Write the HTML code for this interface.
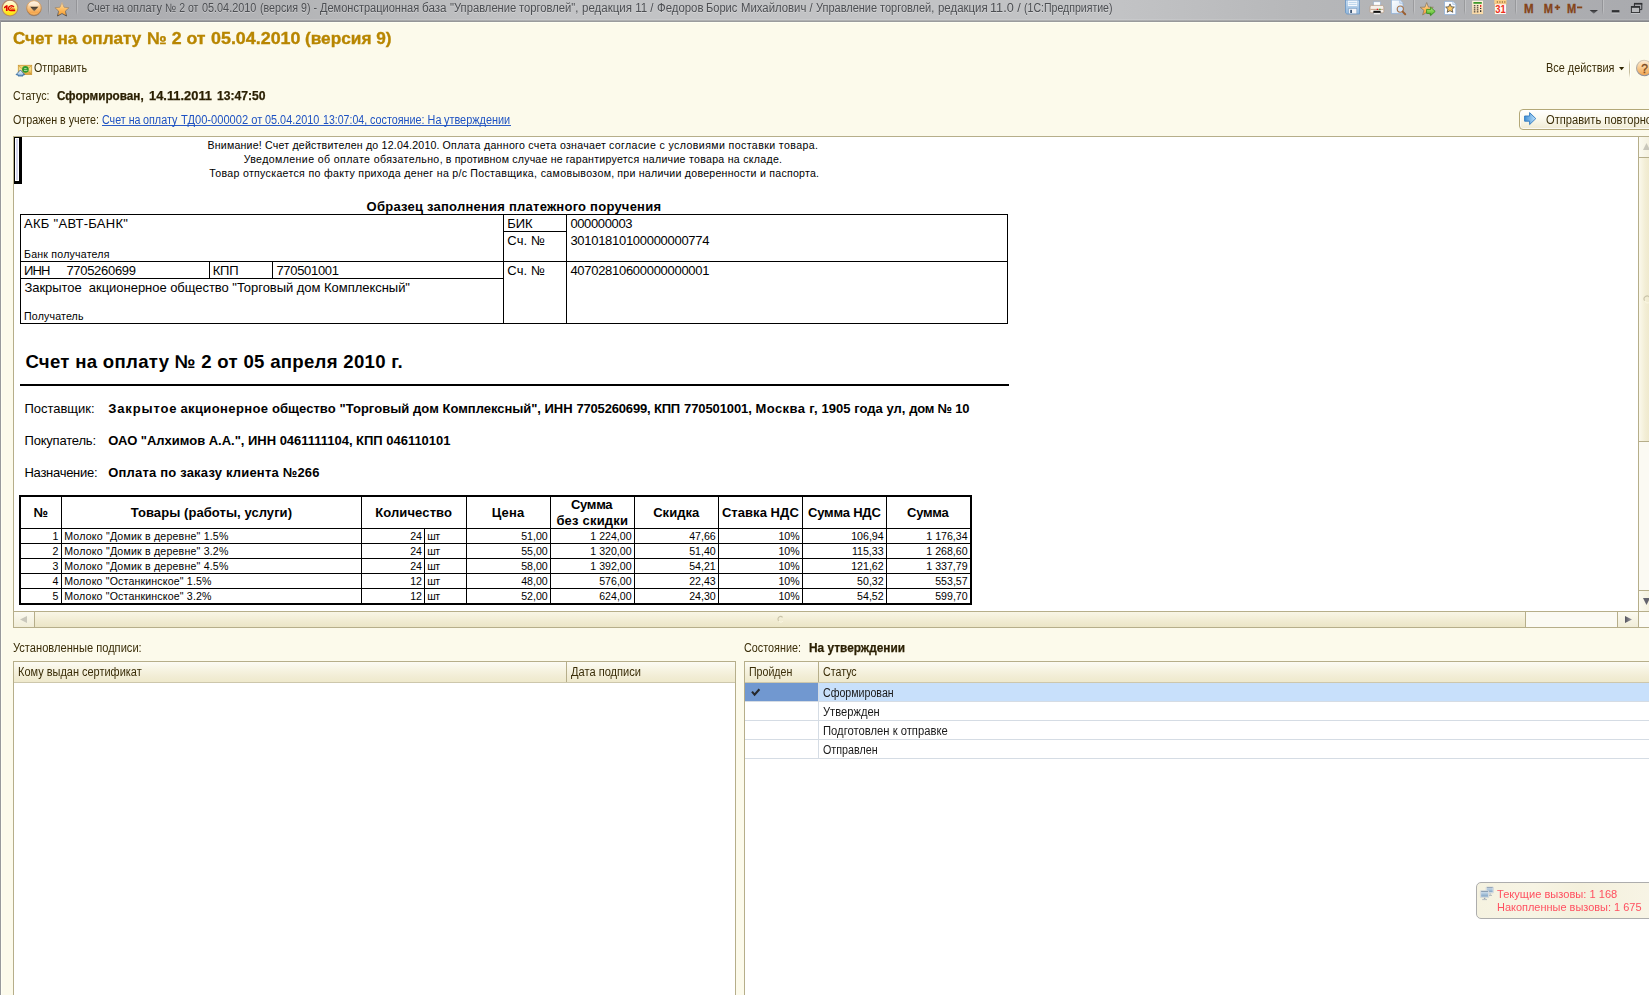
<!DOCTYPE html>
<html lang="ru">
<head>
<meta charset="utf-8">
<title>Счет на оплату № 2 от 05.04.2010 (версия 9)</title>
<style>
html,body{margin:0;padding:0;}
body{width:1649px;height:995px;overflow:hidden;background:#fcfaeb;font-family:"Liberation Sans",sans-serif;}
#app{position:relative;width:1649px;height:995px;overflow:hidden;background:#fcfaeb;}
#app *{box-sizing:border-box;}
.a{position:absolute;}
.t{position:absolute;white-space:pre;margin:0;padding:0;}
div.t span{white-space:pre;}
svg{position:absolute;overflow:visible;}
/* title bar */
#tb{left:0;top:0;width:1649px;height:22px;background:linear-gradient(90deg,#a8a9ad 0,#aaabaf 5%,#b6b7b9 20.6%,#c2c3c5 33%,#c2c3c5 68%,#b6b7b9 79%,#a9aaae 100%);}
#tbhl{left:0;top:19px;width:1649px;height:1px;background:rgba(255,255,255,.12);}
#tbline{left:0;top:20px;width:1649px;height:1px;background:rgba(0,0,0,.10);}
#tbline2{left:0;top:21px;width:1649px;height:1px;background:rgba(0,0,0,.20);}
#toplight{left:1px;top:22px;width:1648px;height:1px;background:#fffff2;}
#lb{left:0;top:20px;width:1px;height:975px;background:#98999c;}
#lb2{left:1px;top:22px;width:1px;height:973px;background:#fffff2;}
.vsep{width:2px;background:linear-gradient(90deg,rgba(0,0,0,.13) 0,rgba(0,0,0,.13) 50%,rgba(255,255,255,.22) 50%,rgba(255,255,255,.22) 100%);-webkit-mask-image:linear-gradient(#000 0,#000 70%,transparent 100%);mask-image:linear-gradient(#000 0,#000 70%,transparent 100%);}
/* document frame */
#doc{left:13px;top:136px;width:1640px;height:492px;border:1px solid #b6ae8a;background:#fff;}
.bk{background:#000;}
.hdr{background:linear-gradient(#fcfbf4 0,#f7f4e3 35%,#f2edd6 70%,#efe9cc 100%);border-bottom:1px solid #cdc7ac;}
.frame{border:1px solid #b6ae8a;background:#fff;}
.tan{background:#b6ae8a;}
.gl{background:#d5dce4;}
</style>
</head>
<body>
<div id="app">
<!-- ===== window chrome ===== -->
<div class="a" id="tb"></div>
<div class="a" id="tbhl"></div>
<div class="a" id="tbline"></div>
<div class="a" id="tbline2"></div>
<div class="a" id="toplight"></div>
<div class="a" id="lb"></div>
<div class="a" id="lb2"></div>
<div class="a vsep" style="left:48px;top:0;height:15px;"></div>
<div class="a vsep" style="left:76px;top:0;height:15px;"></div>
<div class="a vsep" style="left:1413px;top:0;height:15px;"></div>
<div class="a vsep" style="left:1464px;top:0;height:15px;"></div>
<div class="a vsep" style="left:1515px;top:0;height:15px;"></div>
<div class="a vsep" style="left:1602px;top:0;height:15px;"></div>
<svg style="left:0;top:0;" width="1649" height="22" viewBox="0 0 1649 22">
<defs>
  <linearGradient id="g1c" x1="0" y1="0" x2="0" y2="1"><stop offset="0" stop-color="#fffce4"/><stop offset="0.35" stop-color="#fff7a8"/><stop offset="0.7" stop-color="#ffea30"/><stop offset="1" stop-color="#ffdf00"/></linearGradient>
  <linearGradient id="g1cr" x1="0" y1="0" x2="0" y2="1"><stop offset="0" stop-color="#d9b898"/><stop offset="1" stop-color="#9c6a54"/></linearGradient>
  <linearGradient id="gddr" x1="0" y1="0" x2="0" y2="1"><stop offset="0" stop-color="#e0a868"/><stop offset="1" stop-color="#a8703c"/></linearGradient>
  <linearGradient id="gstr" x1="0" y1="0" x2="0" y2="1"><stop offset="0" stop-color="#d0b088"/><stop offset="0.6" stop-color="#8a7a68"/><stop offset="1" stop-color="#4c4a4a"/></linearGradient>
  <linearGradient id="gdd" x1="0" y1="0" x2="0" y2="1"><stop offset="0" stop-color="#fdeeda"/><stop offset="0.45" stop-color="#f8c88c"/><stop offset="0.8" stop-color="#f5a64e"/><stop offset="1" stop-color="#f9c070"/></linearGradient>
  <linearGradient id="gtri" x1="0" y1="0" x2="0" y2="1"><stop offset="0" stop-color="#3c342c"/><stop offset="0.6" stop-color="#6e5c48"/><stop offset="1" stop-color="#b89868"/></linearGradient>
  <linearGradient id="gstar" x1="0" y1="0" x2="0" y2="1"><stop offset="0" stop-color="#ffe0a8"/><stop offset="0.55" stop-color="#fdb95a"/><stop offset="1" stop-color="#f59a2c"/></linearGradient>
  <linearGradient id="gfl" x1="0" y1="0" x2="0" y2="1"><stop offset="0" stop-color="#c4dcf2"/><stop offset="1" stop-color="#8fb6dc"/></linearGradient>
  <linearGradient id="gdoc" x1="0" y1="0" x2="1" y2="1"><stop offset="0" stop-color="#ffffff"/><stop offset="1" stop-color="#cfe0f3"/></linearGradient>
  <linearGradient id="garr" x1="0" y1="0" x2="0" y2="1"><stop offset="0" stop-color="#b5ef7a"/><stop offset="1" stop-color="#4caf2a"/></linearGradient>
  <linearGradient id="gcal" x1="0" y1="0" x2="0" y2="1"><stop offset="0" stop-color="#fff6e4"/><stop offset="1" stop-color="#fbd9a4"/></linearGradient>
  <linearGradient id="gsm" x1="0" y1="0" x2="0" y2="1"><stop offset="0" stop-color="#2e2e30"/><stop offset="1" stop-color="#77787c"/></linearGradient>
</defs>
<!-- 1C logo -->
<circle cx="10" cy="8.1" r="7.9" fill="url(#g1c)" stroke="#b4886c" stroke-width="1.1"/>
<path d="M4.0 7.0 L6.2 5.2 L7.6 5.2 L7.6 10.9 L5.9 10.9 L5.9 7.4 L4.0 8.4 Z" fill="#e00000"/>
<path d="M13.9 7.1 A2.9 2.6 0 0 0 8.5 8.2 A2.5 2.4 0 0 0 10.9 10.5 L15.2 10.5" fill="none" stroke="#e00000" stroke-width="1.35"/>
<path d="M12.4 7.9 A1.2 1.1 0 0 0 10.3 8.3 Q10.4 9.1 11.3 9.1 L14.9 9.1" fill="none" stroke="#e00000" stroke-width="0.8"/>
<!-- dropdown round button -->
<ellipse cx="34" cy="9.2" rx="7.2" ry="7" fill="#6e6c70" opacity="0.45"/>
<circle cx="34" cy="8" r="7.3" fill="url(#gdd)" stroke="url(#gddr)" stroke-width="0.9"/>
<ellipse cx="34" cy="4.2" rx="5.2" ry="2.8" fill="#fff" opacity="0.4"/>
<path d="M30.2 6.7 L38.3 6.7 L34.25 11.6 Z" fill="url(#gtri)"/>
<!-- favourites star -->
<path d="M62 2.6 L64.1 7.2 L69.1 7.7 L65.4 11.1 L66.5 16 L62 13.5 L57.5 16 L58.6 11.1 L54.9 7.7 L59.9 7.2 Z" fill="url(#gstar)" stroke="url(#gstr)" stroke-width="0.9" stroke-linejoin="round"/>
<!-- save -->
<path d="M1345.5 0 H1359.5 V14 H1346.8 L1345.5 12.8 Z" fill="url(#gfl)" stroke="#6f98c4" stroke-width="0.9"/>
<rect x="1347.6" y="0.4" width="10" height="6" fill="#f6fafe" stroke="#9dbbdc" stroke-width="0.5"/>
<path d="M1348.6 2.4 h8 M1348.6 4.4 h8" stroke="#a9c9e6" stroke-width="0.8"/>
<rect x="1348.8" y="8.6" width="8" height="5.2" fill="#f4f4f6" stroke="#7c9cc0" stroke-width="0.5"/>
<rect x="1350.2" y="9.8" width="1.8" height="3.2" fill="#3e5878"/>
<!-- printer -->
<rect x="1373.6" y="1.8" width="6.8" height="4.6" fill="#fbfdff" stroke="#9ab0cc" stroke-width="0.6"/>
<path d="M1371.4 5.4 Q1370 5.6 1370 7 V11.6 Q1370 12.8 1371.2 12.8 H1382.6 Q1383.8 12.8 1383.8 11.6 V7 Q1383.8 5.6 1382.4 5.4 Z" fill="#f6f0ea" stroke="#b7a08c" stroke-width="0.8"/>
<rect x="1370.4" y="8.9" width="13" height="1" fill="#c9a78c"/>
<rect x="1373.4" y="10.8" width="7.2" height="2.2" fill="#101010"/>
<rect x="1373.8" y="13" width="6.4" height="1.6" fill="#ffffff" stroke="#a0a0a0" stroke-width="0.4"/>
<rect x="1376.8" y="8.7" width="1.3" height="1.3" fill="#e82222"/>
<rect x="1379.2" y="8.7" width="1.3" height="1.3" fill="#2fae2f"/>
<!-- print preview -->
<path d="M1391.4 0 H1399.8 L1403 3.2 V13.6 H1391.4 Z" fill="url(#gdoc)" stroke="#8fb0d6" stroke-width="0.8"/>
<path d="M1399.8 0 V3.2 H1403" fill="#e4eefa" stroke="#8fb0d6" stroke-width="0.6"/>
<circle cx="1400.3" cy="9.1" r="3.1" fill="#cfe3fb" stroke="#a87348" stroke-width="1.1"/>
<path d="M1402.6 11.6 L1405.2 14.2" stroke="#9a5e30" stroke-width="2" stroke-linecap="round"/>
<!-- add to favourites (star + arrow) -->
<path d="M1426.7 2.5 L1428.4 7.1 L1433.3 7.3 L1429.5 10.3 L1430.8 15.0 L1426.7 12.3 L1422.6 15.0 L1423.9 10.3 L1420.1 7.3 L1425.0 7.1 Z" fill="url(#gstar)" stroke="#8a7a66" stroke-width="0.8" stroke-linejoin="round"/>
<path d="M1426.6 9.4 H1430.6 V7.2 L1435.2 11.4 L1430.6 15.6 V13.4 H1426.6 Z" fill="url(#garr)" stroke="#2d8a18" stroke-width="0.8" stroke-linejoin="round"/>
<!-- favourites document -->
<path d="M1444.5 1.4 H1452.8 L1455.8 4.4 V14.6 H1444.5 Z" fill="#fbfdff" stroke="#8fb0d6" stroke-width="0.8"/>
<path d="M1452.8 1.4 V4.4 H1455.8" fill="#e4eefa" stroke="#8fb0d6" stroke-width="0.6"/>
<path d="M1450 3.9 L1451.3 6.8 L1454.4 7.1 L1452.1 9.2 L1452.8 12.3 L1450 10.7 L1447.2 12.3 L1447.9 9.2 L1445.6 7.1 L1448.7 6.8 Z" fill="#fcc862" stroke="#4a4640" stroke-width="0.8" stroke-linejoin="round"/>
<!-- calculator -->
<rect x="1471.8" y="0.2" width="11.6" height="14.2" fill="url(#gcal)" stroke="#a7a9a8" stroke-width="0.7"/>
<rect x="1473.4" y="2" width="8.4" height="1.8" fill="#3d9a2d"/>
<g fill="#33302c"><rect x="1473.8" y="5.2" width="1.6" height="1.1"/><rect x="1476.8" y="5.2" width="1.6" height="1.1"/>
<rect x="1473.8" y="7.3" width="1.6" height="1.1"/><rect x="1476.8" y="7.3" width="1.6" height="1.1"/><rect x="1480" y="7.9" width="1.3" height="1.1"/>
<rect x="1473.8" y="9.3" width="1.6" height="1.1"/><rect x="1476.8" y="9.3" width="1.6" height="1.1"/>
<rect x="1473.8" y="11.3" width="1.6" height="1.1"/><rect x="1476.8" y="11.3" width="1.6" height="1.1"/><rect x="1480" y="10.2" width="1.3" height="1.8"/></g>
<rect x="1480" y="5" width="1.3" height="1.9" fill="#e82222"/>
<!-- calendar -->
<rect x="1494.4" y="0" width="12" height="14.4" fill="#fffaf2" stroke="#a7a9a8" stroke-width="0.7"/>
<rect x="1494.4" y="0" width="12" height="3.6" fill="#fbcf86"/>
<path d="M1496.8 2 h1.2 M1499.3 2 h1.2 M1501.8 2 h1.2 M1504.2 2 h1.2" stroke="#6b4a20" stroke-width="1"/>
<path d="M1494.4 3.8 h12" stroke="#f0a050" stroke-width="0.6"/>
<text x="1500.5" y="12.9" font-family="Liberation Sans, sans-serif" font-size="10.5" font-weight="700" fill="#ee2e1c" text-anchor="middle" textLength="10.4" lengthAdjust="spacingAndGlyphs">31</text>
<!-- memory buttons -->
<g font-family="Liberation Sans, sans-serif" font-weight="700" fill="#85441a" stroke="#85441a" stroke-width="0.35">
<text x="1524" y="13.1" font-size="13.6" textLength="9.6" lengthAdjust="spacingAndGlyphs">M</text>
<text x="1543.8" y="13.1" font-size="13.6" textLength="9.2" lengthAdjust="spacingAndGlyphs">M</text>
<text x="1567" y="13.1" font-size="13.6" textLength="9.2" lengthAdjust="spacingAndGlyphs">M</text>
</g>
<path d="M1554.7 7.4 h5.4 M1557.4 4.7 v5.4" stroke="#85441a" stroke-width="1.8"/>
<path d="M1577 7.4 h5.2" stroke="#85441a" stroke-width="1.8"/>
<path d="M1589.6 10 L1598 10 L1593.8 13.8 Z" fill="url(#gsm)"/>
<!-- minimise / restore -->
<rect x="1611.8" y="10.1" width="7.6" height="2.5" fill="#303134"/>
<rect x="1611.8" y="12.6" width="7.6" height="0.8" fill="#d8d9dc" opacity="0.8"/>
<path d="M1634.4 6 V3.7 H1641.8 V9.6 H1640" fill="none" stroke="#303134" stroke-width="1"/>
<rect x="1634" y="2.9" width="8.3" height="1.6" fill="#303134"/>
<rect x="1631.4" y="6.6" width="8.2" height="6" fill="#b9babd" stroke="#303134" stroke-width="1"/>
<rect x="1631" y="6" width="9" height="1.8" fill="#303134"/>
<rect x="1631" y="13.1" width="9" height="0.8" fill="#d8d9dc" opacity="0.8"/>
</svg>


<!-- ===== resend button ===== -->
<div class="a" style="left:1519px;top:109px;width:140px;height:21px;border:1px solid #b3a878;border-radius:4px;background:linear-gradient(#ffffff 0,#fbf9ee 45%,#efead3 100%);box-shadow:inset 0 0 0 1px rgba(255,255,255,.7);"></div>

<div class="a" style="left:102px;top:125px;width:409px;height:1px;background:#2a5cc6;"></div>
<!-- ===== command bar ===== -->
<svg style="left:0;top:55px;" width="1649" height="80" viewBox="0 55 1649 80">
<defs>
  <linearGradient id="genv" x1="0" y1="0" x2="0" y2="1"><stop offset="0" stop-color="#f4d070"/><stop offset="0.45" stop-color="#f8e08c"/><stop offset="1" stop-color="#dc9c2c"/></linearGradient>
  <linearGradient id="ghelp" x1="0" y1="0" x2="0" y2="1"><stop offset="0" stop-color="#fdeed8"/><stop offset="0.5" stop-color="#f8c98e"/><stop offset="1" stop-color="#f0a24c"/></linearGradient>
  <linearGradient id="gbl" x1="0" y1="0" x2="1" y2="0"><stop offset="0" stop-color="#3f8fd6"/><stop offset="1" stop-color="#bfe2fb"/></linearGradient>
  <linearGradient id="gsep" x1="0" y1="0" x2="0" y2="1"><stop offset="0" stop-color="#cfc8ac" stop-opacity="0"/><stop offset="0.3" stop-color="#c4bc9c"/><stop offset="0.7" stop-color="#c4bc9c"/><stop offset="1" stop-color="#cfc8ac" stop-opacity="0"/></linearGradient>
  <linearGradient id="ghr" x1="0" y1="0" x2="0" y2="1"><stop offset="0" stop-color="#d6cab4"/><stop offset="1" stop-color="#8c8e9a"/></linearGradient>
  <linearGradient id="gup" x1="0" y1="0" x2="0" y2="1"><stop offset="0" stop-color="#f4f9fd"/><stop offset="0.6" stop-color="#b9d3ea"/><stop offset="1" stop-color="#5f93c4"/></linearGradient>
</defs>
<!-- send icon: envelope + @ + arrow -->
<rect x="18.3" y="65.3" width="13.4" height="9.2" fill="url(#genv)" stroke="#cc9a38" stroke-width="0.8"/>
<path d="M18.5 65.5 L22.4 69 M31.5 65.5 L28.4 68.4 M31.5 74.3 L28.2 71.6" fill="none" stroke="#c28e30" stroke-width="0.6"/>
<circle cx="25.4" cy="69.4" r="3.3" fill="#2f9a2c"/>
<path d="M24.2 68.6 h2.4 M24 70.4 h3.4" stroke="#d4efc8" stroke-width="0.8"/>
<path d="M16 74.7 L20.4 70 L24.8 74.7 L23 74.7 L23 76 L18 76 L18 74.7 Z" fill="url(#gup)" stroke="#2c669e" stroke-width="0.8" stroke-linejoin="round"/>
<!-- all actions arrow, separator, help -->
<path d="M1619 67 L1624.2 67 L1621.6 70.2 Z" fill="#2d2400"/>
<rect x="1629" y="59" width="1" height="19" fill="url(#gsep)"/><rect x="1630" y="59" width="1" height="19" fill="#fffffa" opacity="0.8"/>
<circle cx="1644.2" cy="68" r="7.7" fill="url(#ghelp)" stroke="url(#ghr)" stroke-width="1.1"/>
<text x="1644.6" y="72.6" font-family="Liberation Sans, sans-serif" font-size="12" font-weight="400" fill="#7a4a20" stroke="#7a4a20" stroke-width="0.3" text-anchor="middle">?</text>
<!-- resend arrow -->
<path d="M1524.6 116 H1529.6 V112.6 L1535.8 118.6 L1529.6 124.6 V121.2 H1524.6 Z" fill="url(#gbl)" stroke="#2f78c0" stroke-width="0.9" stroke-linejoin="round"/>
</svg>


<!-- ===== spreadsheet document ===== -->
<div class="a" id="doc"></div>
<!-- cell cursor -->
<div class="a bk" style="left:14px;top:137px;width:8px;height:47px;"></div>
<div class="a" style="left:15px;top:138px;width:4px;height:43px;background:#fff;"></div>
<div class="a" style="left:16px;top:139px;width:2px;height:41px;background:#d6d8f0;"></div>

<!-- payment order table -->
<div class="a" style="left:20px;top:214px;width:988px;height:110px;border:1px solid #000;"></div>
<div class="a bk" style="left:20px;top:261px;width:988px;height:1px;"></div>
<div class="a bk" style="left:20px;top:278px;width:484px;height:1px;"></div>
<div class="a bk" style="left:503px;top:214px;width:1px;height:110px;"></div>
<div class="a bk" style="left:566px;top:214px;width:1px;height:110px;"></div>
<div class="a bk" style="left:503px;top:231px;width:64px;height:1px;"></div>
<div class="a bk" style="left:209px;top:261px;width:1px;height:18px;"></div>
<div class="a bk" style="left:272px;top:261px;width:1px;height:18px;"></div>

<!-- rule under invoice heading -->
<div class="a bk" style="left:20px;top:384px;width:989px;height:2px;"></div>

<!-- goods table -->
<div class="a" style="left:19px;top:495px;width:953px;height:110px;border:2px solid #000;"></div>
<div class="a bk" style="left:21px;top:528px;width:949px;height:1px;"></div>
<div class="a bk" style="left:21px;top:543px;width:949px;height:1px;"></div>
<div class="a bk" style="left:21px;top:558px;width:949px;height:1px;"></div>
<div class="a bk" style="left:21px;top:573px;width:949px;height:1px;"></div>
<div class="a bk" style="left:21px;top:588px;width:949px;height:1px;"></div>
<div class="a bk" style="left:61px;top:497px;width:1px;height:106px;"></div>
<div class="a bk" style="left:361px;top:497px;width:1px;height:106px;"></div>
<div class="a bk" style="left:424px;top:529px;width:1px;height:74px;"></div>
<div class="a bk" style="left:466px;top:497px;width:1px;height:106px;"></div>
<div class="a bk" style="left:550px;top:497px;width:1px;height:106px;"></div>
<div class="a bk" style="left:634px;top:497px;width:1px;height:106px;"></div>
<div class="a bk" style="left:718px;top:497px;width:1px;height:106px;"></div>
<div class="a bk" style="left:802px;top:497px;width:1px;height:106px;"></div>
<div class="a bk" style="left:886px;top:497px;width:1px;height:106px;"></div>

<!-- vertical scrollbar -->
<div class="a tan" style="left:1638px;top:137px;width:1px;height:490px;"></div>
<div class="a" style="left:1639px;top:137px;width:12px;height:20px;background:linear-gradient(90deg,#fbfaf0,#f3efdb);"></div>
<div class="a tan" style="left:1639px;top:157px;width:12px;height:1px;"></div>
<div class="a" style="left:1639px;top:158px;width:12px;height:283px;background:linear-gradient(90deg,#fbf9ec 0,#f3eed6 50%,#ede7c9 100%);"></div>
<div class="a tan" style="left:1639px;top:441px;width:12px;height:1px;"></div>
<div class="a" style="left:1639px;top:442px;width:12px;height:148px;background:#fbfaf3;"></div>
<div class="a tan" style="left:1639px;top:590px;width:12px;height:1px;"></div>
<div class="a" style="left:1639px;top:591px;width:12px;height:20px;background:linear-gradient(90deg,#fbfaf0,#f3efdb);"></div>
<svg style="left:1639px;top:137px;" width="10" height="480" viewBox="0 0 10 480">
  <path d="M4 13 L7.5 6 L11 13 Z" fill="#c9c7bb"/>
  <path d="M4 461 L11 461 L7.5 468 Z" fill="#64646e"/>
  <path d="M10.5 160.3 A2.6 2.6 0 0 0 5.6 163.6" fill="none" stroke="#c9c3a8" stroke-width="1.1"/><path d="M5.9 164 A2.6 2.6 0 0 0 10.5 165" fill="none" stroke="#fbf8e4" stroke-width="1"/>
</svg>
<!-- horizontal scrollbar -->
<div class="a tan" style="left:14px;top:611px;width:1640px;height:1px;"></div>
<div class="a" style="left:14px;top:612px;width:20px;height:15px;background:linear-gradient(#fbfaf0,#f1edd8);"></div>
<div class="a tan" style="left:34px;top:612px;width:1px;height:15px;"></div>
<div class="a" style="left:35px;top:612px;width:1490px;height:15px;background:linear-gradient(#f9f6e6 0,#f2edd5 50%,#ebe5c6 100%);"></div>
<div class="a tan" style="left:1525px;top:612px;width:1px;height:15px;"></div>
<div class="a" style="left:1526px;top:612px;width:91px;height:15px;background:#fbfaf3;"></div>
<div class="a tan" style="left:1617px;top:612px;width:1px;height:15px;"></div>
<div class="a" style="left:1618px;top:612px;width:20px;height:15px;background:linear-gradient(#fbfaf0,#f1edd8);"></div>
<div class="a" style="left:1639px;top:612px;width:12px;height:15px;background:#fcfbf4;"></div>
<svg style="left:14px;top:612px;" width="1624" height="15" viewBox="0 0 1624 15">
  <path d="M13 4 L13 11 L6 7.5 Z" fill="#c9c7bb"/>
  <defs><linearGradient id="gra" x1="0" y1="0" x2="1" y2="0"><stop offset="0" stop-color="#55555f"/><stop offset="1" stop-color="#9c9ca4"/></linearGradient></defs><path d="M1611 4 L1618 7.5 L1611 11 Z" fill="url(#gra)"/>
  <path d="M768.6 5.4 A2.5 2.5 0 0 0 764.6 8.8" fill="none" stroke="#c9c3a8" stroke-width="1.1"/><path d="M765 9.3 A2.5 2.5 0 0 0 769 9" fill="none" stroke="#fbf8e4" stroke-width="1"/>
</svg>

<!-- ===== signatures list (left) ===== -->
<div class="a frame" style="left:13px;top:661px;width:723px;height:340px;"></div>
<div class="a hdr" style="left:14px;top:662px;width:721px;height:21px;"></div>
<div class="a tan" style="left:566px;top:662px;width:1px;height:20px;"></div>

<!-- ===== states list (right) ===== -->
<div class="a frame" style="left:744px;top:661px;width:920px;height:340px;"></div>
<div class="a hdr" style="left:745px;top:662px;width:910px;height:21px;"></div>
<div class="a tan" style="left:818px;top:662px;width:1px;height:20px;"></div>
<div class="a" style="left:745px;top:683px;width:73px;height:18px;background:#7198d0;"></div>
<div class="a" style="left:819px;top:683px;width:835px;height:18px;background:#c8e0fb;"></div>
<div class="a gl" style="left:818px;top:683px;width:1px;height:76px;"></div>
<div class="a gl" style="left:745px;top:701px;width:910px;height:1px;"></div>
<div class="a gl" style="left:745px;top:720px;width:910px;height:1px;"></div>
<div class="a gl" style="left:745px;top:739px;width:910px;height:1px;"></div>
<div class="a gl" style="left:745px;top:758px;width:910px;height:1px;"></div>
<svg style="left:750px;top:687px;" width="12" height="10" viewBox="0 0 12 10">
  <path d="M2 4.6 L4.6 7.6 L9.4 2.2" fill="none" stroke="#26282c" stroke-width="2.1" stroke-linecap="butt" stroke-linejoin="miter"/>
</svg>

<!-- ===== performance popup ===== -->
<div class="a" style="left:1476px;top:882px;width:190px;height:37px;border:1px solid #adadad;border-radius:5px;background:linear-gradient(90deg,#f5f2e0 0,#f7f4e4 30%,#f4f0dc 55%,#f8f5e7 100%);"></div>
<svg style="left:1478px;top:884px;" width="20" height="20" viewBox="1478 884 20 20">
<defs><linearGradient id="gmon" x1="0" y1="0" x2="0" y2="1"><stop offset="0" stop-color="#d4e2ee"/><stop offset="0.5" stop-color="#a9c3da"/><stop offset="1" stop-color="#7fa2c2"/></linearGradient></defs>
<rect x="1486.2" y="887" width="7.2" height="6" rx="0.6" fill="#eef1f4" stroke="#b8c0c8" stroke-width="0.5"/>
<rect x="1486.9" y="887.6" width="5.8" height="4.6" fill="url(#gmon)"/>
<rect x="1486.9" y="887.4" width="5.8" height="0.7" fill="#6c8298"/>
<path d="M1490.2 893.4 v1.4 M1489 895.4 h3" stroke="#aab2ba" stroke-width="0.9"/>
<rect x="1480.4" y="890.6" width="8.4" height="7" rx="0.6" fill="#eef1f4" stroke="#b8c0c8" stroke-width="0.5"/>
<rect x="1481.1" y="891.3" width="7" height="5.4" fill="url(#gmon)"/>
<rect x="1481.1" y="891.1" width="7" height="0.7" fill="#6c8298"/>
<path d="M1484.6 897.8 v1.2" stroke="#9aa4ae" stroke-width="1.4"/><path d="M1482.2 899.6 h4.8" stroke="#aeb6be" stroke-width="0.9"/>
</svg>


<!-- text -->
<span class="t" style="top:-2.00px;font-size:12px;line-height:20px;color:#4c4e52;transform:scaleX(0.8634);transform-origin:0 0;left:86.8px;text-shadow:0 1px 0 rgba(255,255,255,.3);">Счет на</span>
<span class="t" style="top:-2.00px;font-size:12px;line-height:20px;color:#4c4e52;transform:scaleX(0.9132);transform-origin:0 0;left:127.3px;text-shadow:0 1px 0 rgba(255,255,255,.3);">оплату</span>
<span class="t" style="top:-2.00px;font-size:12px;line-height:20px;color:#4c4e52;transform:scaleX(0.8761);transform-origin:0 0;left:165.4px;text-shadow:0 1px 0 rgba(255,255,255,.3);">№ 2 от</span>
<span class="t" style="top:-2.00px;font-size:12px;line-height:20px;color:#4c4e52;transform:scaleX(0.9041);transform-origin:0 0;left:202px;text-shadow:0 1px 0 rgba(255,255,255,.3);">05.04.2010</span>
<span class="t" style="top:-2.00px;font-size:12px;line-height:20px;color:#4c4e52;transform:scaleX(0.8889);transform-origin:0 0;left:259.5px;text-shadow:0 1px 0 rgba(255,255,255,.3);">(версия 9) -</span>
<span class="t" style="top:-2.00px;font-size:12px;line-height:20px;color:#4c4e52;transform:scaleX(0.9187);transform-origin:0 0;left:319.7px;text-shadow:0 1px 0 rgba(255,255,255,.3);">Демонстрационная</span>
<span class="t" style="top:-2.00px;font-size:12px;line-height:20px;color:#4c4e52;transform:scaleX(0.9719);transform-origin:0 0;left:422px;text-shadow:0 1px 0 rgba(255,255,255,.3);">база</span>
<span class="t" style="top:-2.00px;font-size:12px;line-height:20px;color:#4c4e52;transform:scaleX(0.9342);transform-origin:0 0;left:449.8px;text-shadow:0 1px 0 rgba(255,255,255,.3);">"Управление</span>
<span class="t" style="top:-2.00px;font-size:12px;line-height:20px;color:#4c4e52;transform:scaleX(0.9343);transform-origin:0 0;left:519.3px;text-shadow:0 1px 0 rgba(255,255,255,.3);">торговлей",</span>
<span class="t" style="top:-2.00px;font-size:12px;line-height:20px;color:#4c4e52;transform:scaleX(0.9591);transform-origin:0 0;left:581.9px;text-shadow:0 1px 0 rgba(255,255,255,.3);">редакция 11 /</span>
<span class="t" style="top:-2.00px;font-size:12px;line-height:20px;color:#4c4e52;transform:scaleX(0.9502);transform-origin:0 0;left:656.6px;text-shadow:0 1px 0 rgba(255,255,255,.3);">Федоров</span>
<span class="t" style="top:-2.00px;font-size:12px;line-height:20px;color:#4c4e52;transform:scaleX(0.9223);transform-origin:0 0;left:706.3px;text-shadow:0 1px 0 rgba(255,255,255,.3);">Борис</span>
<span class="t" style="top:-2.00px;font-size:12px;line-height:20px;color:#4c4e52;transform:scaleX(0.9465);transform-origin:0 0;left:740.8px;text-shadow:0 1px 0 rgba(255,255,255,.3);">Михайлович /</span>
<span class="t" style="top:-2.00px;font-size:12px;line-height:20px;color:#4c4e52;transform:scaleX(0.9158);transform-origin:0 0;left:815.7px;text-shadow:0 1px 0 rgba(255,255,255,.3);">Управление</span>
<span class="t" style="top:-2.00px;font-size:12px;line-height:20px;color:#4c4e52;transform:scaleX(0.9155);transform-origin:0 0;left:880px;text-shadow:0 1px 0 rgba(255,255,255,.3);">торговлей,</span>
<span class="t" style="top:-2.00px;font-size:12px;line-height:20px;color:#4c4e52;transform:scaleX(0.9540);transform-origin:0 0;left:937.5px;text-shadow:0 1px 0 rgba(255,255,255,.3);">редакция</span>
<span class="t" style="top:-2.00px;font-size:12px;line-height:20px;color:#4c4e52;transform:scaleX(1.0569);transform-origin:0 0;left:990.4px;text-shadow:0 1px 0 rgba(255,255,255,.3);">11.0 /</span>
<span class="t" style="top:-2.00px;font-size:12px;line-height:20px;color:#4c4e52;transform:scaleX(0.8795);transform-origin:0 0;left:1024.4px;text-shadow:0 1px 0 rgba(255,255,255,.3);">(1С:Предприятие)</span>
<span class="t" style="top:29.01px;font-size:16.8px;line-height:20px;color:#b88600;font-weight:700;transform:scaleX(1.0172);transform-origin:0 0;left:13.3px;-webkit-text-stroke:0.35px #b88600;">Счет на оплату</span>
<span class="t" style="top:29.01px;font-size:16.8px;line-height:20px;color:#b88600;font-weight:700;transform:scaleX(1.0555);transform-origin:0 0;left:146.8px;-webkit-text-stroke:0.35px #b88600;">№ 2 от</span>
<span class="t" style="top:29.01px;font-size:16.8px;line-height:20px;color:#b88600;font-weight:700;transform:scaleX(1.0655);transform-origin:0 0;left:210.5px;-webkit-text-stroke:0.35px #b88600;">05.04.2010</span>
<span class="t" style="top:29.01px;font-size:16.8px;line-height:20px;color:#b88600;font-weight:700;transform:scaleX(1.0273);transform-origin:0 0;left:305.2px;-webkit-text-stroke:0.35px #b88600;">(версия 9)</span>
<span class="t" style="top:58.01px;font-size:12px;line-height:20px;color:#3a2d08;transform:scaleX(0.8905);transform-origin:0 0;left:34px;">Отправить</span>
<span class="t" style="top:58.01px;font-size:12px;line-height:20px;color:#3a2d08;transform:scaleX(0.9077);transform-origin:0 0;left:1546px;">Все действия</span>
<span class="t" style="top:86.01px;font-size:12px;line-height:20px;color:#3a2d08;transform:scaleX(0.8842);transform-origin:0 0;left:13px;">Статус:</span>
<span class="t" style="top:86.01px;font-size:12.2px;line-height:20px;color:#2a1f02;font-weight:700;transform:scaleX(0.9618);transform-origin:0 0;left:56.6px;-webkit-text-stroke:0.25px #2a1f02;">Сформирован,</span>
<span class="t" style="top:86.01px;font-size:12.2px;line-height:20px;color:#2a1f02;font-weight:700;transform:scaleX(1.0561);transform-origin:0 0;left:148.5px;-webkit-text-stroke:0.25px #2a1f02;">14.11.2011</span>
<span class="t" style="top:86.01px;font-size:12.2px;line-height:20px;color:#2a1f02;font-weight:700;transform:scaleX(0.9960);transform-origin:0 0;left:216.7px;-webkit-text-stroke:0.25px #2a1f02;">13:47:50</span>
<span class="t" style="top:110.02px;font-size:12px;line-height:20px;color:#3a2d08;transform:scaleX(0.8916);transform-origin:0 0;left:13px;">Отражен в учете:</span>
<span class="t" style="top:110.02px;font-size:12px;line-height:20px;color:#1e52c2;transform:scaleX(0.8911);transform-origin:0 0;left:101.9px;">Счет на</span>
<span class="t" style="top:110.02px;font-size:12px;line-height:20px;color:#1e52c2;transform:scaleX(0.9001);transform-origin:0 0;left:143.4px;">оплату</span>
<span class="t" style="top:110.02px;font-size:12px;line-height:20px;color:#1e52c2;transform:scaleX(0.9272);transform-origin:0 0;left:180.8px;">ТД00-000002 от</span>
<span class="t" style="top:110.02px;font-size:12px;line-height:20px;color:#1e52c2;transform:scaleX(0.9057);transform-origin:0 0;left:265.1px;">05.04.2010</span>
<span class="t" style="top:110.02px;font-size:12px;line-height:20px;color:#1e52c2;transform:scaleX(0.8812);transform-origin:0 0;left:322.5px;">13:07:04,</span>
<span class="t" style="top:110.02px;font-size:12px;line-height:20px;color:#1e52c2;transform:scaleX(0.8997);transform-origin:0 0;left:369.6px;">состояние: На</span>
<span class="t" style="top:110.02px;font-size:12px;line-height:20px;color:#1e52c2;transform:scaleX(0.9090);transform-origin:0 0;left:444px;">утверждении</span>
<span class="t" style="top:110.01px;font-size:12px;line-height:20px;color:#3a2d08;transform:scaleX(0.9287);transform-origin:0 0;left:1546px;">Отправить повторно</span>
<span class="t" style="top:135.01px;font-size:10.6px;line-height:20px;color:#000;letter-spacing:0.202px;left:207.5px;">Внимание! Счет действителен до 12.04.2010.</span>
<span class="t" style="top:135.01px;font-size:10.6px;line-height:20px;color:#000;letter-spacing:0.284px;left:442.6px;">Оплата данного счета означает</span>
<span class="t" style="top:135.01px;font-size:10.6px;line-height:20px;color:#000;letter-spacing:0.396px;left:608.9px;">согласие с условиями поставки товара.</span>
<span class="t" style="top:149.01px;font-size:10.6px;line-height:20px;color:#000;letter-spacing:0.394px;left:243.7px;">Уведомление об оплате обязательно,</span>
<span class="t" style="top:149.01px;font-size:10.6px;line-height:20px;color:#000;letter-spacing:0.196px;left:445.7px;">в противном случае не</span>
<span class="t" style="top:149.01px;font-size:10.6px;line-height:20px;color:#000;letter-spacing:0.276px;left:565.7px;">гарантируется наличие товара на складе.</span>
<span class="t" style="top:163.01px;font-size:10.6px;line-height:20px;color:#000;letter-spacing:0.311px;left:209.3px;">Товар отпускается по факту прихода денег на р/с</span>
<span class="t" style="top:163.01px;font-size:10.6px;line-height:20px;color:#000;letter-spacing:0.345px;left:470.2px;">Поставщика, самовывозом,</span>
<span class="t" style="top:163.01px;font-size:10.6px;line-height:20px;color:#000;letter-spacing:0.245px;left:617.3px;">при наличии доверенности и паспорта.</span>
<span class="t" style="top:197.00px;font-size:13px;line-height:20px;color:#000;font-weight:700;letter-spacing:0.233px;left:366.6px;">Образец заполнения платежного поручения</span>
<span class="t" style="top:214.01px;font-size:13px;line-height:20px;color:#000;letter-spacing:0.288px;left:24px;">АКБ "АВТ-БАНК"</span>
<span class="t" style="top:244.01px;font-size:10.6px;line-height:20px;color:#000;letter-spacing:0.213px;left:24px;">Банк получателя</span>
<span class="t" style="top:261.00px;font-size:13px;line-height:20px;color:#000;letter-spacing:-0.812px;left:24px;">ИНН</span>
<span class="t" style="top:261.00px;font-size:13px;line-height:20px;color:#000;letter-spacing:-0.301px;left:66.4px;">7705260699</span>
<span class="t" style="top:261.00px;font-size:13px;line-height:20px;color:#000;letter-spacing:-0.233px;left:212.7px;">КПП</span>
<span class="t" style="top:261.00px;font-size:13px;line-height:20px;color:#000;letter-spacing:-0.310px;left:276.4px;">770501001</span>
<span class="t" style="top:278.00px;font-size:13px;line-height:20px;color:#000;letter-spacing:-0.036px;left:24.4px;">Закрытое &nbsp;акционерное общество "Торговый дом Комплексный"</span>
<span class="t" style="top:306.00px;font-size:10.6px;line-height:20px;color:#000;letter-spacing:0.177px;left:24px;">Получатель</span>
<span class="t" style="top:214.01px;font-size:13px;line-height:20px;color:#000;letter-spacing:-0.127px;left:507.3px;">БИК</span>
<span class="t" style="top:231.00px;font-size:13px;line-height:20px;color:#000;letter-spacing:0.128px;left:507.3px;">Сч. №</span>
<span class="t" style="top:261.00px;font-size:13px;line-height:20px;color:#000;letter-spacing:0.128px;left:507.3px;">Сч. №</span>
<span class="t" style="top:214.01px;font-size:13px;line-height:20px;color:#000;letter-spacing:-0.372px;left:570.4px;">000000003</span>
<span class="t" style="top:231.00px;font-size:13px;line-height:20px;color:#000;letter-spacing:-0.290px;left:570.4px;">30101810100000000774</span>
<span class="t" style="top:261.00px;font-size:13px;line-height:20px;color:#000;letter-spacing:-0.290px;left:570.4px;">40702810600000000001</span>
<span class="t" style="top:352.00px;font-size:18.6px;line-height:20px;color:#000;font-weight:700;letter-spacing:0.297px;left:25.4px;">Счет на оплату № 2 от 05 апреля 2010 г.</span>
<span class="t" style="top:399.00px;font-size:13px;line-height:20px;color:#000;letter-spacing:-0.031px;left:24.5px;">Поставщик:</span>
<span class="t" style="top:431.00px;font-size:13px;line-height:20px;color:#000;letter-spacing:-0.197px;left:24.5px;">Покупатель:</span>
<span class="t" style="top:463.00px;font-size:13px;line-height:20px;color:#000;letter-spacing:-0.284px;left:24.5px;">Назначение:</span>
<span class="t" style="top:399.00px;font-size:13px;line-height:20px;color:#000;font-weight:700;letter-spacing:0.872px;left:108.2px;">Закрытое</span>
<span class="t" style="top:399.00px;font-size:13px;line-height:20px;color:#000;font-weight:700;letter-spacing:0.398px;left:180.4px;">акционерное</span>
<span class="t" style="top:399.00px;font-size:13px;line-height:20px;color:#000;font-weight:700;letter-spacing:0.063px;left:271.9px;">общество</span>
<span class="t" style="top:399.00px;font-size:13px;line-height:20px;color:#000;font-weight:700;letter-spacing:0.051px;left:339.5px;">"Торговый дом</span>
<span class="t" style="top:399.00px;font-size:13px;line-height:20px;color:#000;font-weight:700;letter-spacing:-0.032px;left:442.6px;">Комплексный", ИНН</span>
<span class="t" style="top:399.00px;font-size:13px;line-height:20px;color:#000;font-weight:700;letter-spacing:-0.168px;left:576.4px;">7705260699, КПП</span>
<span class="t" style="top:399.00px;font-size:13px;line-height:20px;color:#000;font-weight:700;letter-spacing:-0.099px;left:684px;">770501001,</span>
<span class="t" style="top:399.00px;font-size:13px;line-height:20px;color:#000;font-weight:700;letter-spacing:0.389px;left:755.6px;">Москва г,</span>
<span class="t" style="top:399.00px;font-size:13px;line-height:20px;color:#000;font-weight:700;letter-spacing:0.043px;left:821.4px;">1905 года ул,</span>
<span class="t" style="top:399.00px;font-size:13px;line-height:20px;color:#000;font-weight:700;letter-spacing:-0.247px;left:909.3px;">дом № 10</span>
<span class="t" style="top:431.00px;font-size:13px;line-height:20px;color:#000;font-weight:700;letter-spacing:-0.017px;left:108.2px;">ОАО "Алхимов А.А.", ИНН 0461111104, КПП 046110101</span>
<span class="t" style="top:463.00px;font-size:13px;line-height:20px;color:#000;font-weight:700;letter-spacing:0.194px;left:108.2px;">Оплата по заказу клиента №266</span>
<span class="t" style="top:503.00px;font-size:13px;line-height:20px;color:#000;font-weight:700;left:33.6px;">№</span>
<span class="t" style="top:503.00px;font-size:13px;line-height:20px;color:#000;font-weight:700;letter-spacing:0.064px;left:130.8px;">Товары (работы, услуги)</span>
<span class="t" style="top:503.00px;font-size:13px;line-height:20px;color:#000;font-weight:700;letter-spacing:0.115px;left:375.2px;">Количество</span>
<span class="t" style="top:503.00px;font-size:13px;line-height:20px;color:#000;font-weight:700;letter-spacing:0.210px;left:491.7px;">Цена</span>
<span class="t" style="top:495.00px;font-size:13px;line-height:20px;color:#000;font-weight:700;letter-spacing:-0.312px;left:571px;">Сумма</span>
<span class="t" style="top:511.00px;font-size:13px;line-height:20px;color:#000;font-weight:700;letter-spacing:0.199px;left:556.4px;">без скидки</span>
<span class="t" style="top:503.00px;font-size:13px;line-height:20px;color:#000;font-weight:700;letter-spacing:0.045px;left:653.2px;">Скидка</span>
<span class="t" style="top:503.00px;font-size:13px;line-height:20px;color:#000;font-weight:700;letter-spacing:0.058px;left:721.9px;">Ставка НДС</span>
<span class="t" style="top:503.00px;font-size:13px;line-height:20px;color:#000;font-weight:700;letter-spacing:-0.199px;left:808px;">Сумма НДС</span>
<span class="t" style="top:503.00px;font-size:13px;line-height:20px;color:#000;font-weight:700;letter-spacing:-0.262px;left:907px;">Сумма</span>
<span class="t" style="top:526.00px;font-size:10.6px;line-height:20px;color:#000;right:1590.60px;">1</span>
<span class="t" style="top:526.00px;font-size:10.6px;line-height:20px;color:#000;letter-spacing:0.194px;left:64.2px;">Молоко "Домик в деревне" 1.5%</span>
<span class="t" style="top:526.00px;font-size:10.6px;line-height:20px;color:#000;right:1227.00px;">24</span>
<span class="t" style="top:526.00px;font-size:10.6px;line-height:20px;color:#000;letter-spacing:-0.659px;left:427.3px;">шт</span>
<span class="t" style="top:526.00px;font-size:10.6px;line-height:20px;color:#000;right:1101.30px;">51,00</span>
<span class="t" style="top:526.00px;font-size:10.6px;line-height:20px;color:#000;right:1017.40px;">1 224,00</span>
<span class="t" style="top:526.00px;font-size:10.6px;line-height:20px;color:#000;right:933.30px;">47,66</span>
<span class="t" style="top:526.00px;font-size:10.6px;line-height:20px;color:#000;right:849.40px;">10%</span>
<span class="t" style="top:526.00px;font-size:10.6px;line-height:20px;color:#000;right:765.40px;">106,94</span>
<span class="t" style="top:526.00px;font-size:10.6px;line-height:20px;color:#000;right:681.40px;">1 176,34</span>
<span class="t" style="top:541.00px;font-size:10.6px;line-height:20px;color:#000;right:1590.60px;">2</span>
<span class="t" style="top:541.00px;font-size:10.6px;line-height:20px;color:#000;letter-spacing:0.194px;left:64.2px;">Молоко "Домик в деревне" 3.2%</span>
<span class="t" style="top:541.00px;font-size:10.6px;line-height:20px;color:#000;right:1227.00px;">24</span>
<span class="t" style="top:541.00px;font-size:10.6px;line-height:20px;color:#000;letter-spacing:-0.659px;left:427.3px;">шт</span>
<span class="t" style="top:541.00px;font-size:10.6px;line-height:20px;color:#000;right:1101.30px;">55,00</span>
<span class="t" style="top:541.00px;font-size:10.6px;line-height:20px;color:#000;right:1017.40px;">1 320,00</span>
<span class="t" style="top:541.00px;font-size:10.6px;line-height:20px;color:#000;right:933.30px;">51,40</span>
<span class="t" style="top:541.00px;font-size:10.6px;line-height:20px;color:#000;right:849.40px;">10%</span>
<span class="t" style="top:541.00px;font-size:10.6px;line-height:20px;color:#000;right:765.40px;">115,33</span>
<span class="t" style="top:541.00px;font-size:10.6px;line-height:20px;color:#000;right:681.40px;">1 268,60</span>
<span class="t" style="top:556.00px;font-size:10.6px;line-height:20px;color:#000;right:1590.60px;">3</span>
<span class="t" style="top:556.00px;font-size:10.6px;line-height:20px;color:#000;letter-spacing:0.194px;left:64.2px;">Молоко "Домик в деревне" 4.5%</span>
<span class="t" style="top:556.00px;font-size:10.6px;line-height:20px;color:#000;right:1227.00px;">24</span>
<span class="t" style="top:556.00px;font-size:10.6px;line-height:20px;color:#000;letter-spacing:-0.659px;left:427.3px;">шт</span>
<span class="t" style="top:556.00px;font-size:10.6px;line-height:20px;color:#000;right:1101.30px;">58,00</span>
<span class="t" style="top:556.00px;font-size:10.6px;line-height:20px;color:#000;right:1017.40px;">1 392,00</span>
<span class="t" style="top:556.00px;font-size:10.6px;line-height:20px;color:#000;right:933.30px;">54,21</span>
<span class="t" style="top:556.00px;font-size:10.6px;line-height:20px;color:#000;right:849.40px;">10%</span>
<span class="t" style="top:556.00px;font-size:10.6px;line-height:20px;color:#000;right:765.40px;">121,62</span>
<span class="t" style="top:556.00px;font-size:10.6px;line-height:20px;color:#000;right:681.40px;">1 337,79</span>
<span class="t" style="top:571.00px;font-size:10.6px;line-height:20px;color:#000;right:1590.60px;">4</span>
<span class="t" style="top:571.00px;font-size:10.6px;line-height:20px;color:#000;letter-spacing:0.162px;left:64.2px;">Молоко "Останкинское" 1.5%</span>
<span class="t" style="top:571.00px;font-size:10.6px;line-height:20px;color:#000;right:1227.00px;">12</span>
<span class="t" style="top:571.00px;font-size:10.6px;line-height:20px;color:#000;letter-spacing:-0.659px;left:427.3px;">шт</span>
<span class="t" style="top:571.00px;font-size:10.6px;line-height:20px;color:#000;right:1101.30px;">48,00</span>
<span class="t" style="top:571.00px;font-size:10.6px;line-height:20px;color:#000;right:1017.40px;">576,00</span>
<span class="t" style="top:571.00px;font-size:10.6px;line-height:20px;color:#000;right:933.30px;">22,43</span>
<span class="t" style="top:571.00px;font-size:10.6px;line-height:20px;color:#000;right:849.40px;">10%</span>
<span class="t" style="top:571.00px;font-size:10.6px;line-height:20px;color:#000;right:765.40px;">50,32</span>
<span class="t" style="top:571.00px;font-size:10.6px;line-height:20px;color:#000;right:681.40px;">553,57</span>
<span class="t" style="top:586.00px;font-size:10.6px;line-height:20px;color:#000;right:1590.60px;">5</span>
<span class="t" style="top:586.00px;font-size:10.6px;line-height:20px;color:#000;letter-spacing:0.162px;left:64.2px;">Молоко "Останкинское" 3.2%</span>
<span class="t" style="top:586.00px;font-size:10.6px;line-height:20px;color:#000;right:1227.00px;">12</span>
<span class="t" style="top:586.00px;font-size:10.6px;line-height:20px;color:#000;letter-spacing:-0.659px;left:427.3px;">шт</span>
<span class="t" style="top:586.00px;font-size:10.6px;line-height:20px;color:#000;right:1101.30px;">52,00</span>
<span class="t" style="top:586.00px;font-size:10.6px;line-height:20px;color:#000;right:1017.40px;">624,00</span>
<span class="t" style="top:586.00px;font-size:10.6px;line-height:20px;color:#000;right:933.30px;">24,30</span>
<span class="t" style="top:586.00px;font-size:10.6px;line-height:20px;color:#000;right:849.40px;">10%</span>
<span class="t" style="top:586.00px;font-size:10.6px;line-height:20px;color:#000;right:765.40px;">54,52</span>
<span class="t" style="top:586.00px;font-size:10.6px;line-height:20px;color:#000;right:681.40px;">599,70</span>
<span class="t" style="top:638.01px;font-size:12px;line-height:20px;color:#3a2d08;transform:scaleX(0.9261);transform-origin:0 0;left:13px;">Установленные подписи:</span>
<span class="t" style="top:662.01px;font-size:12px;line-height:20px;color:#3a2d08;transform:scaleX(0.9142);transform-origin:0 0;left:18px;">Кому выдан сертификат</span>
<span class="t" style="top:662.01px;font-size:12px;line-height:20px;color:#3a2d08;transform:scaleX(0.9243);transform-origin:0 0;left:571.3px;">Дата подписи</span>
<span class="t" style="top:638.01px;font-size:12px;line-height:20px;color:#3a2d08;transform:scaleX(0.9016);transform-origin:0 0;left:743.8px;">Состояние:</span>
<span class="t" style="top:638.01px;font-size:12.2px;line-height:20px;color:#2a1f02;font-weight:700;transform:scaleX(0.9730);transform-origin:0 0;left:808.5px;-webkit-text-stroke:0.25px #2a1f02;">На утверждении</span>
<span class="t" style="top:662.01px;font-size:12px;line-height:20px;color:#3a2d08;transform:scaleX(0.8840);transform-origin:0 0;left:749px;">Пройден</span>
<span class="t" style="top:662.01px;font-size:12px;line-height:20px;color:#3a2d08;transform:scaleX(0.8883);transform-origin:0 0;left:822.6px;">Статус</span>
<span class="t" style="top:683.01px;font-size:12px;line-height:20px;color:#1a1a1a;transform:scaleX(0.8867);transform-origin:0 0;left:822.6px;">Сформирован</span>
<span class="t" style="top:702.00px;font-size:12px;line-height:20px;color:#1a1a1a;transform:scaleX(0.9304);transform-origin:0 0;left:822.6px;">Утвержден</span>
<span class="t" style="top:721.00px;font-size:12px;line-height:20px;color:#1a1a1a;transform:scaleX(0.9368);transform-origin:0 0;left:822.6px;">Подготовлен к отправке</span>
<span class="t" style="top:740.00px;font-size:12px;line-height:20px;color:#1a1a1a;transform:scaleX(0.8939);transform-origin:0 0;left:822.6px;">Отправлен</span>
<span class="t" style="top:884.01px;font-size:11.2px;line-height:20px;color:#ff5060;transform:scaleX(0.9923);transform-origin:0 0;left:1497px;">Текущие вызовы: 1 168</span>
<span class="t" style="top:897.01px;font-size:11.2px;line-height:20px;color:#ff5060;transform:scaleX(0.9797);transform-origin:0 0;left:1497px;">Накопленные вызовы: 1 675</span>
</div>
</body>
</html>
